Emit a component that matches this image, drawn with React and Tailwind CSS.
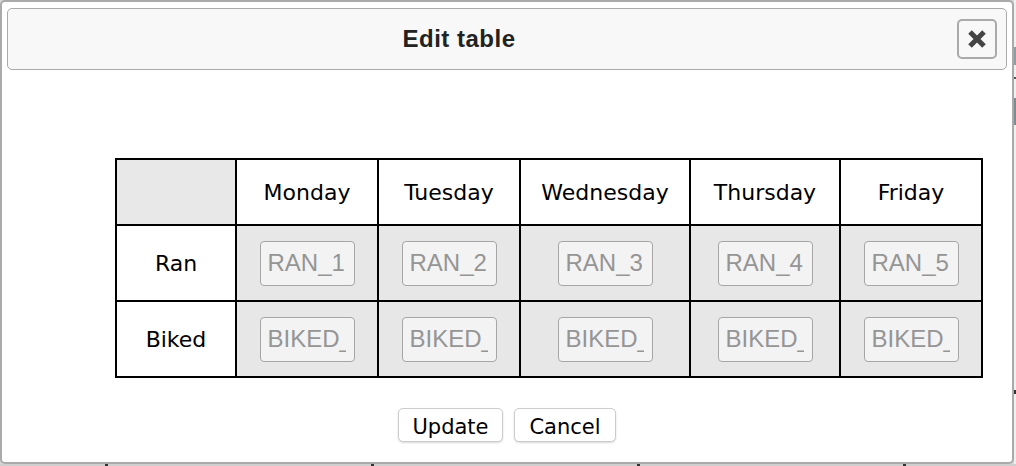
import React from 'react';

const days = [
  { name: 'Monday', w: 'w-[142px]' },
  { name: 'Tuesday', w: 'w-[142px]' },
  { name: 'Wednesday', w: 'w-[170px]' },
  { name: 'Thursday', w: 'w-[150px]' },
  { name: 'Friday', w: 'w-[142px]' },
];

const rows = [
  { label: 'Ran', key: 'RAN', h: 'h-[76px]' },
  { label: 'Biked', key: 'BIKED', h: 'h-[76px]' },
];

const cellFont = { fontFamily: '"DejaVu Sans", Verdana, sans-serif' };

function CloseIcon() {
  return (
    <svg width="20" height="20" viewBox="0 0 20 20">
      <path d="M3 3 L17 17 M17 3 L3 17" stroke="#444" strokeWidth="5" strokeLinecap="butt" fill="none" />
    </svg>
  );
}

function EditTable() {
  return (
    <div className="ml-[108px] mt-[88px] w-[868px] border-l-2 border-t-2 border-black" style={cellFont}>
      {/* header row */}
      <div className="flex h-[66px]">
        <div className="w-[120px] bg-[#e8e8e8] border-r-2 border-b-2 border-black" />
        {days.map((d) => (
          <div
            key={d.name}
            className={`${d.w} flex items-center justify-center bg-white border-r-2 border-b-2 border-black text-[22px] text-black`}
          >
            {d.name}
          </div>
        ))}
      </div>

      {rows.map((r) => (
        <div key={r.key} className={`flex ${r.h}`}>
          <div className="w-[120px] flex items-center justify-center bg-white border-r-2 border-b-2 border-black text-[22px] text-black">
            {r.label}
          </div>
          {days.map((d, i) => (
            <div
              key={d.name}
              className={`${d.w} flex items-center justify-center bg-[#e7e7e7] border-r-2 border-b-2 border-black`}
            >
              <input
                readOnly
                disabled
                value={`${r.key}_${i + 1}`}
                className="w-[95px] h-[45px] pl-[7px] pr-[8px] border border-[#a6a6a6] rounded-[4px] bg-[#f3f3f3] text-[#959595] text-[24px] outline-none"
                style={{ fontFamily: '"Liberation Sans", Arial, sans-serif' }}
              />
            </div>
          ))}
        </div>
      ))}
    </div>
  );
}

export default function App() {
  return (
    <div className="w-[1016px] h-[466px] bg-[#d6d6d6] overflow-hidden flex flex-col">
      <div className="flex h-[464px]">
        {/* dialog */}
        <div className="w-[1014px] h-[464px] bg-white border-2 border-[#aaaaaa] rounded-[5px] px-[5px] pt-[6px] flex flex-col">
          <div className="h-[62px] border border-[#aaaaaa] rounded-[5px] bg-[#f8f8f8] flex items-center">
            <div
              className="w-[902px] text-center text-[24px] font-bold text-[#222] tracking-[0.5px]"
              style={{ fontFamily: '"Liberation Sans", Arial, sans-serif' }}
            >
              Edit table
            </div>
            <button className="ml-auto mr-[9px] w-[40px] h-[40px] border-2 border-[#aaaaaa] rounded-[5px] bg-[#f8f8f8] flex items-center justify-center">
              <CloseIcon />
            </button>
          </div>

          <EditTable />

          <div className="flex justify-center gap-[11px] mt-[30px]" style={cellFont}>
            <button className="w-[105px] h-[34px] pt-[3px] bg-white border border-[#cccccc] rounded-[5px] shadow-[0_1px_2px_rgba(0,0,0,0.15)] text-[21px] text-black">
              Update
            </button>
            <button className="w-[102px] h-[34px] pt-[3px] bg-white border border-[#cccccc] rounded-[5px] shadow-[0_1px_2px_rgba(0,0,0,0.15)] text-[21px] text-black">
              Cancel
            </button>
          </div>
        </div>

        {/* page behind the dialog, right edge */}
        <div className="w-[2px] flex flex-col bg-[#f0f0f0]">
          <div className="h-[47px]" />
          <div className="h-[18px] bg-[#8e9ca3]" />
          <div className="h-[12px]" />
          <div className="h-[2px] bg-[#555]" />
          <div className="h-[19px]" />
          <div className="h-[27px] bg-[#7d8a90]" />
          <div className="h-[265px]" />
          <div className="h-[4px] bg-[#333]" />
        </div>
      </div>

      {/* page behind the dialog, bottom edge */}
      <div className="h-[2px] flex bg-[#cfcfcf]">
        <div className="w-[105px]" />
        <div className="w-[3px] bg-[#333]" />
        <div className="w-[263px]" />
        <div className="w-[3px] bg-[#333]" />
        <div className="w-[263px]" />
        <div className="w-[3px] bg-[#333]" />
        <div className="w-[263px]" />
        <div className="w-[3px] bg-[#333]" />
      </div>
    </div>
  );
}
